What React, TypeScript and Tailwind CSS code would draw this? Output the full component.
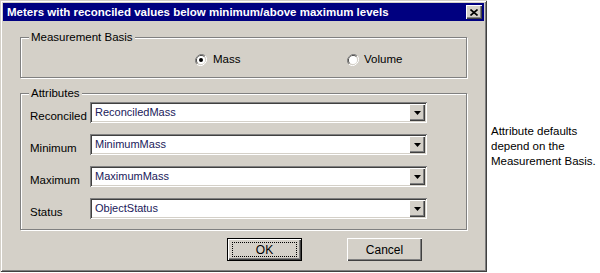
import React from "react";

const font = { fontFamily: '"Liberation Sans", Arial, sans-serif' };

function Radio({ checked }: { checked?: boolean }) {
  return (
    <svg width="12" height="12" viewBox="0 0 12 12" className="shrink-0">
      <path d="M10.2 1.8 A6 6 0 0 0 1.8 10.2" fill="none" stroke="#808080" strokeWidth="1" />
      <path d="M1.8 10.2 A6 6 0 0 0 10.2 1.8" fill="none" stroke="#ffffff" strokeWidth="1" />
      <path d="M9.5 2.5 A5 5 0 0 0 2.5 9.5" fill="none" stroke="#404040" strokeWidth="1" />
      <path d="M2.5 9.5 A5 5 0 0 0 9.5 2.5" fill="none" stroke="#d4d0c8" strokeWidth="1" />
      <circle cx="6" cy="6" r="4" fill="#ffffff" />
      {checked && <circle cx="6" cy="6" r="2" fill="#000000" />}
    </svg>
  );
}

function Combo({ value }: { value: string }) {
  return (
    <div className="flex h-[21px] w-[337px] items-center bg-white shadow-[inset_1px_1px_0_#808080,inset_-1px_-1px_0_#ffffff,inset_2px_2px_0_#404040,inset_-2px_-2px_0_#d4d0c8]">
      <span className="flex-1 pl-[5px] text-[11px] leading-[13px] text-[#20205a]">{value}</span>
      <div className="mr-[2px] flex h-[17px] w-[16px] items-center justify-center bg-[#d4d0c8] shadow-[inset_1px_1px_0_#ffffff,inset_-1px_-1px_0_#404040,inset_-2px_-2px_0_#808080]">
        <svg width="7" height="4" viewBox="0 0 7 4">
          <path d="M0 0 H7 L3.5 4 Z" fill="#000" />
        </svg>
      </div>
    </div>
  );
}

function Row({ label, value }: { label: string; value: string }) {
  return (
    <div className="flex items-center">
      <span className="mt-[7px] w-[60px] text-[11.5px] leading-[14px]">{label}</span>
      <Combo value={value} />
    </div>
  );
}

function Button({ label, isDefault }: { label: string; isDefault?: boolean }) {
  if (isDefault) {
    return (
      <div className="h-[23px] w-[75px] border border-black">
        <div className="flex h-full w-full items-center justify-center bg-[#d4d0c8] shadow-[inset_1px_1px_0_#ffffff,inset_-1px_-1px_0_#404040,inset_-2px_-2px_0_#808080]">
          <span className="flex h-[15px] w-[65px] items-center justify-center border border-dotted border-black text-[12px]">
            {label}
          </span>
        </div>
      </div>
    );
  }
  return (
    <div className="flex h-[23px] w-[75px] items-center justify-center bg-[#d4d0c8] text-[12px] shadow-[inset_1px_1px_0_#ffffff,inset_-1px_-1px_0_#404040,inset_-2px_-2px_0_#808080]">
      {label}
    </div>
  );
}

export default function App() {
  return (
    <div className="flex h-[273px] w-[600px] items-start bg-white text-black" style={font}>
      <div className="h-[272px] w-[487px] shrink-0 bg-[#d4d0c8] p-[3px] shadow-[inset_1px_1px_0_#d4d0c8,inset_-1px_-1px_0_#404040,inset_2px_2px_0_#ffffff,inset_-2px_-2px_0_#808080]">
        {/* title bar */}
        <div className="flex h-[18px] items-center justify-between bg-[#000080] pl-[4px] pr-[2px]">
          <span className="text-[11.5px] font-bold leading-[14px] text-white">
            Meters with reconciled values below minimum/above maximum levels
          </span>
          <div className="flex h-[14px] w-[16px] items-center justify-center bg-[#d4d0c8] shadow-[inset_1px_1px_0_#ffffff,inset_-1px_-1px_0_#404040,inset_-2px_-2px_0_#808080]">
            <svg width="8" height="7" viewBox="0 0 8 7">
              <path d="M0.5 0.5 L7.5 6.5 M7.5 0.5 L0.5 6.5" stroke="#000" strokeWidth="1.6" />
            </svg>
          </div>
        </div>

        <div className="px-[17px]">
          <fieldset className="mt-[9px] border border-[#808080] px-[9px] pb-[10px] pt-[9px] shadow-[inset_1px_1px_0_#ffffff,1px_1px_0_#ffffff]">
            <legend className="ml-[-1px] bg-[#d4d0c8] px-[2px] text-[11.5px] leading-[14px]">Measurement Basis</legend>
            <div className="flex h-[14px] items-center pl-[165px]">
              <label className="flex w-[152px] items-center gap-[6px] text-[11.5px]">
                <Radio checked />
                Mass
              </label>
              <label className="flex items-center gap-[5px] text-[11.5px]">
                <Radio />
                Volume
              </label>
            </div>
          </fieldset>

          <fieldset className="mt-[8px] border border-[#808080] px-[9px] pb-[10px] pt-[2px] shadow-[inset_1px_1px_0_#ffffff,1px_1px_0_#ffffff]">
            <legend className="ml-[-1px] bg-[#d4d0c8] px-[2px] text-[11.5px] leading-[14px]">Attributes</legend>
            <div className="flex flex-col gap-[11px]">
              <Row label="Reconciled" value="ReconciledMass" />
              <Row label="Minimum" value="MinimumMass" />
              <Row label="Maximum" value="MaximumMass" />
              <Row label="Status" value="ObjectStatus" />
            </div>
          </fieldset>

          <div className="mt-[8px] flex gap-[45px] pl-[207px]">
            <Button label="OK" isDefault />
            <Button label="Cancel" />
          </div>
        </div>
      </div>

      <p className="ml-[4px] mt-[124px] whitespace-nowrap text-[11.5px] leading-[15px]">
        Attribute defaults
        <br />
        depend on the
        <br />
        Measurement Basis.
      </p>
    </div>
  );
}
